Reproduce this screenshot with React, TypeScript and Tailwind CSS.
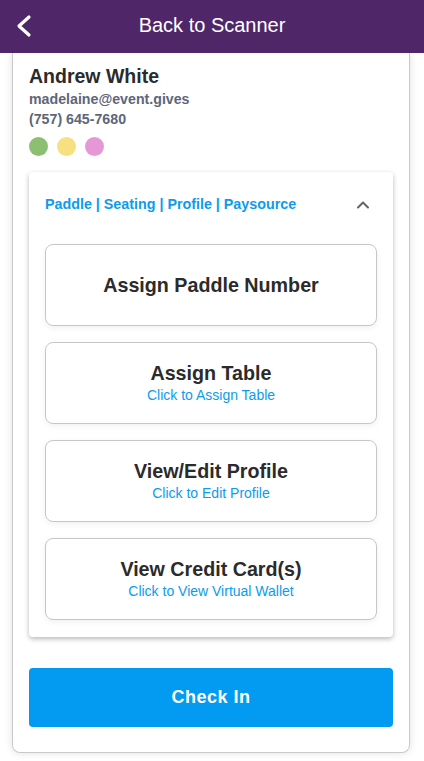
import { ChevronUp } from "lucide-react";

const actions = [
  { title: "Assign Paddle Number", sub: "" },
  { title: "Assign Table", sub: "Click to Assign Table" },
  { title: "View/Edit Profile", sub: "Click to Edit Profile" },
  { title: "View Credit Card(s)", sub: "Click to View Virtual Wallet" },
];

const App = () => {
  return (
    <div
      className="w-[424px] h-[761px] bg-white overflow-hidden flex flex-col"
      style={{ fontFamily: '"Liberation Sans", Arial, sans-serif' }}
    >
      <div className="h-[53px] shrink-0 bg-[#4f2769] flex items-center relative z-10 pb-[3px]">
        <svg className="absolute left-[14px] top-[12px]" width="22" height="28" viewBox="0 0 22 28" fill="none">
          <polyline points="15,5 5,14 15,23" stroke="white" strokeWidth="3.2" strokeLinecap="round" strokeLinejoin="round" />
        </svg>
        <div className="w-full text-center text-white text-[20px]">Back to Scanner</div>
      </div>

      <div className="ml-[12px] w-[398px] border border-t-0 border-[#c9c9c9] rounded-b-[8px] shadow-[0_0_8px_rgba(0,0,0,0.12)] px-[16px] pt-[12px] pb-[25px]">
        <div className="text-[19.5px] font-bold text-[#2b2b2b] leading-[22px]">Andrew White</div>
        <div className="mt-[3px] text-[14.2px] font-bold text-[#5e6678] leading-[18px]">madelaine@event.gives</div>
        <div className="mt-[2px] text-[14.2px] font-bold text-[#5e6678] leading-[18px]">(757) 645-7680</div>
        <div className="flex gap-[9px] mt-[9px]">
          <div className="w-[19px] h-[19px] rounded-full bg-[#8dbf73]" />
          <div className="w-[19px] h-[19px] rounded-full bg-[#f7e07f]" />
          <div className="w-[19px] h-[19px] rounded-full bg-[#e597d6]" />
        </div>

        <div className="mt-[16px] rounded-[4px] bg-white shadow-[0_2px_5px_rgba(0,0,0,0.28)] px-[16px] pb-[17px]">
          <div className="h-[64px] flex items-center justify-between pt-[1px]">
            <span className="text-[14.3px] font-bold text-[#0c9bed]">Paddle | Seating | Profile | Paysource</span>
            <ChevronUp className="text-[#666] mr-[4px]" size={20} strokeWidth={2.5} />
          </div>
          <div className="flex flex-col gap-[16px] pt-[8px]">
            {actions.map((a) => (
              <div
                key={a.title}
                className="h-[82px] rounded-[8px] border border-[#c6c6c6] shadow-[0_2px_6px_rgba(0,0,0,0.06)] flex flex-col items-center justify-center"
              >
                <div className="text-[19.7px] font-bold text-[#2b2b2b] leading-[24px]">{a.title}</div>
                {a.sub && <div className="text-[14px] text-[#0c9bed] leading-[20px]">{a.sub}</div>}
              </div>
            ))}
          </div>
        </div>

        <button className="mt-[31px] w-full h-[59px] rounded-[4px] bg-[#039bf2] text-white text-[18px] font-bold tracking-[0.5px]">
          Check In
        </button>
      </div>
    </div>
  );
};

export default App;
